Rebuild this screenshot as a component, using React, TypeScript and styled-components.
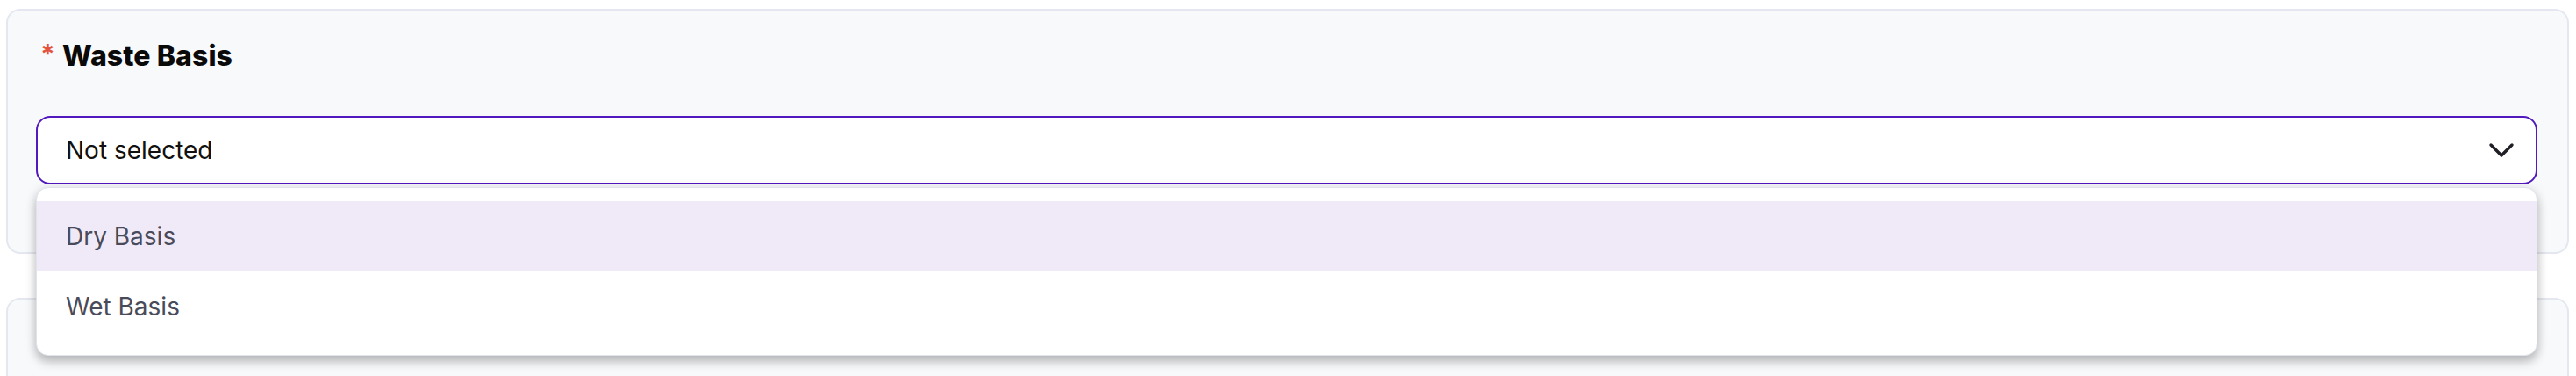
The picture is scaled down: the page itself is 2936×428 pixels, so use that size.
import { FC } from 'react'
import styled, { createGlobalStyle } from 'styled-components'

const GlobalStyle = createGlobalStyle`
  * {
    box-sizing: border-box;
  }
  body {
    margin: 0;
    background: #ffffff;
    font-family: Inter, 'Liberation Sans', sans-serif;
  }
`

const options = ['Dry Basis', 'Wet Basis']

const ChevronDown: FC = () => (
  <svg width="30" height="18" viewBox="0 0 30 18" fill="none">
    <path
      d="M3 3 L15 15 L27 3"
      stroke="#1f1f26"
      strokeWidth="3.4"
      strokeLinecap="round"
      strokeLinejoin="round"
    />
  </svg>
)

const App: FC = () => {
  const highlighted = 'Dry Basis'

  return (
    <Page>
      <GlobalStyle />
      <Card>
        <Label>
          <Required>*</Required>
          Waste Basis
        </Label>
        <SelectWrap>
          <Trigger>
            <TriggerText>Not selected</TriggerText>
            <ChevronDown />
          </Trigger>
          <Menu>
            {options.map((option) => (
              <Option key={option} isActive={option === highlighted}>
                {option}
              </Option>
            ))}
          </Menu>
        </SelectWrap>
      </Card>
      <Card />
    </Page>
  )
}

export default App

const Page = styled.div`
  display: flex;
  flex-direction: column;
  gap: 50px;
  padding: 10px 8px 0 7px;
  height: 428px;
  overflow: hidden;
`

const Card = styled.section`
  flex-shrink: 0;
  min-height: 279px;
  padding: 32px 34px 76px 32px;
  background: #f8f9fb;
  border: 2px solid #e4e7ef;
  border-radius: 16px;
`

const Label = styled.h4`
  display: flex;
  align-items: baseline;
  gap: 8px;
  margin: 0 0 48px 5px;
  font-size: 32px;
  line-height: 40px;
  font-weight: 800;
  color: #0a0a0a;
  letter-spacing: 0.1px;
`

const Required = styled.span`
  position: relative;
  top: -3px;
  font-size: 30px;
  font-weight: 700;
  color: #e4533c;
`

const SelectWrap = styled.div`
  position: relative;
`

const Trigger = styled.div`
  display: flex;
  align-items: center;
  justify-content: space-between;
  height: 78px;
  padding: 0 24px 0 32px;
  background: #ffffff;
  border: 2px solid #5219be;
  border-radius: 16px;
`

const TriggerText = styled.span`
  font-size: 28px;
  color: #111111;
`

const Menu = styled.ul`
  position: absolute;
  top: calc(100% + 3px);
  left: 0;
  right: 0;
  margin: 0;
  padding: 15px 0;
  list-style: none;
  background: #ffffff;
  border: 1.5px solid #dfe3ec;
  border-radius: 14px;
  box-shadow: 0 0 14px rgba(0, 0, 0, 0.08), 0 7px 12px rgba(0, 0, 0, 0.24);
  z-index: 10;
`

const Option = styled.li<{ isActive?: boolean }>`
  display: flex;
  align-items: center;
  height: 80px;
  padding: 0 33px;
  font-size: 28px;
  color: #4a4b5a;
  background: ${({ isActive }) => (isActive ? '#f0eaf8' : 'transparent')};
`
